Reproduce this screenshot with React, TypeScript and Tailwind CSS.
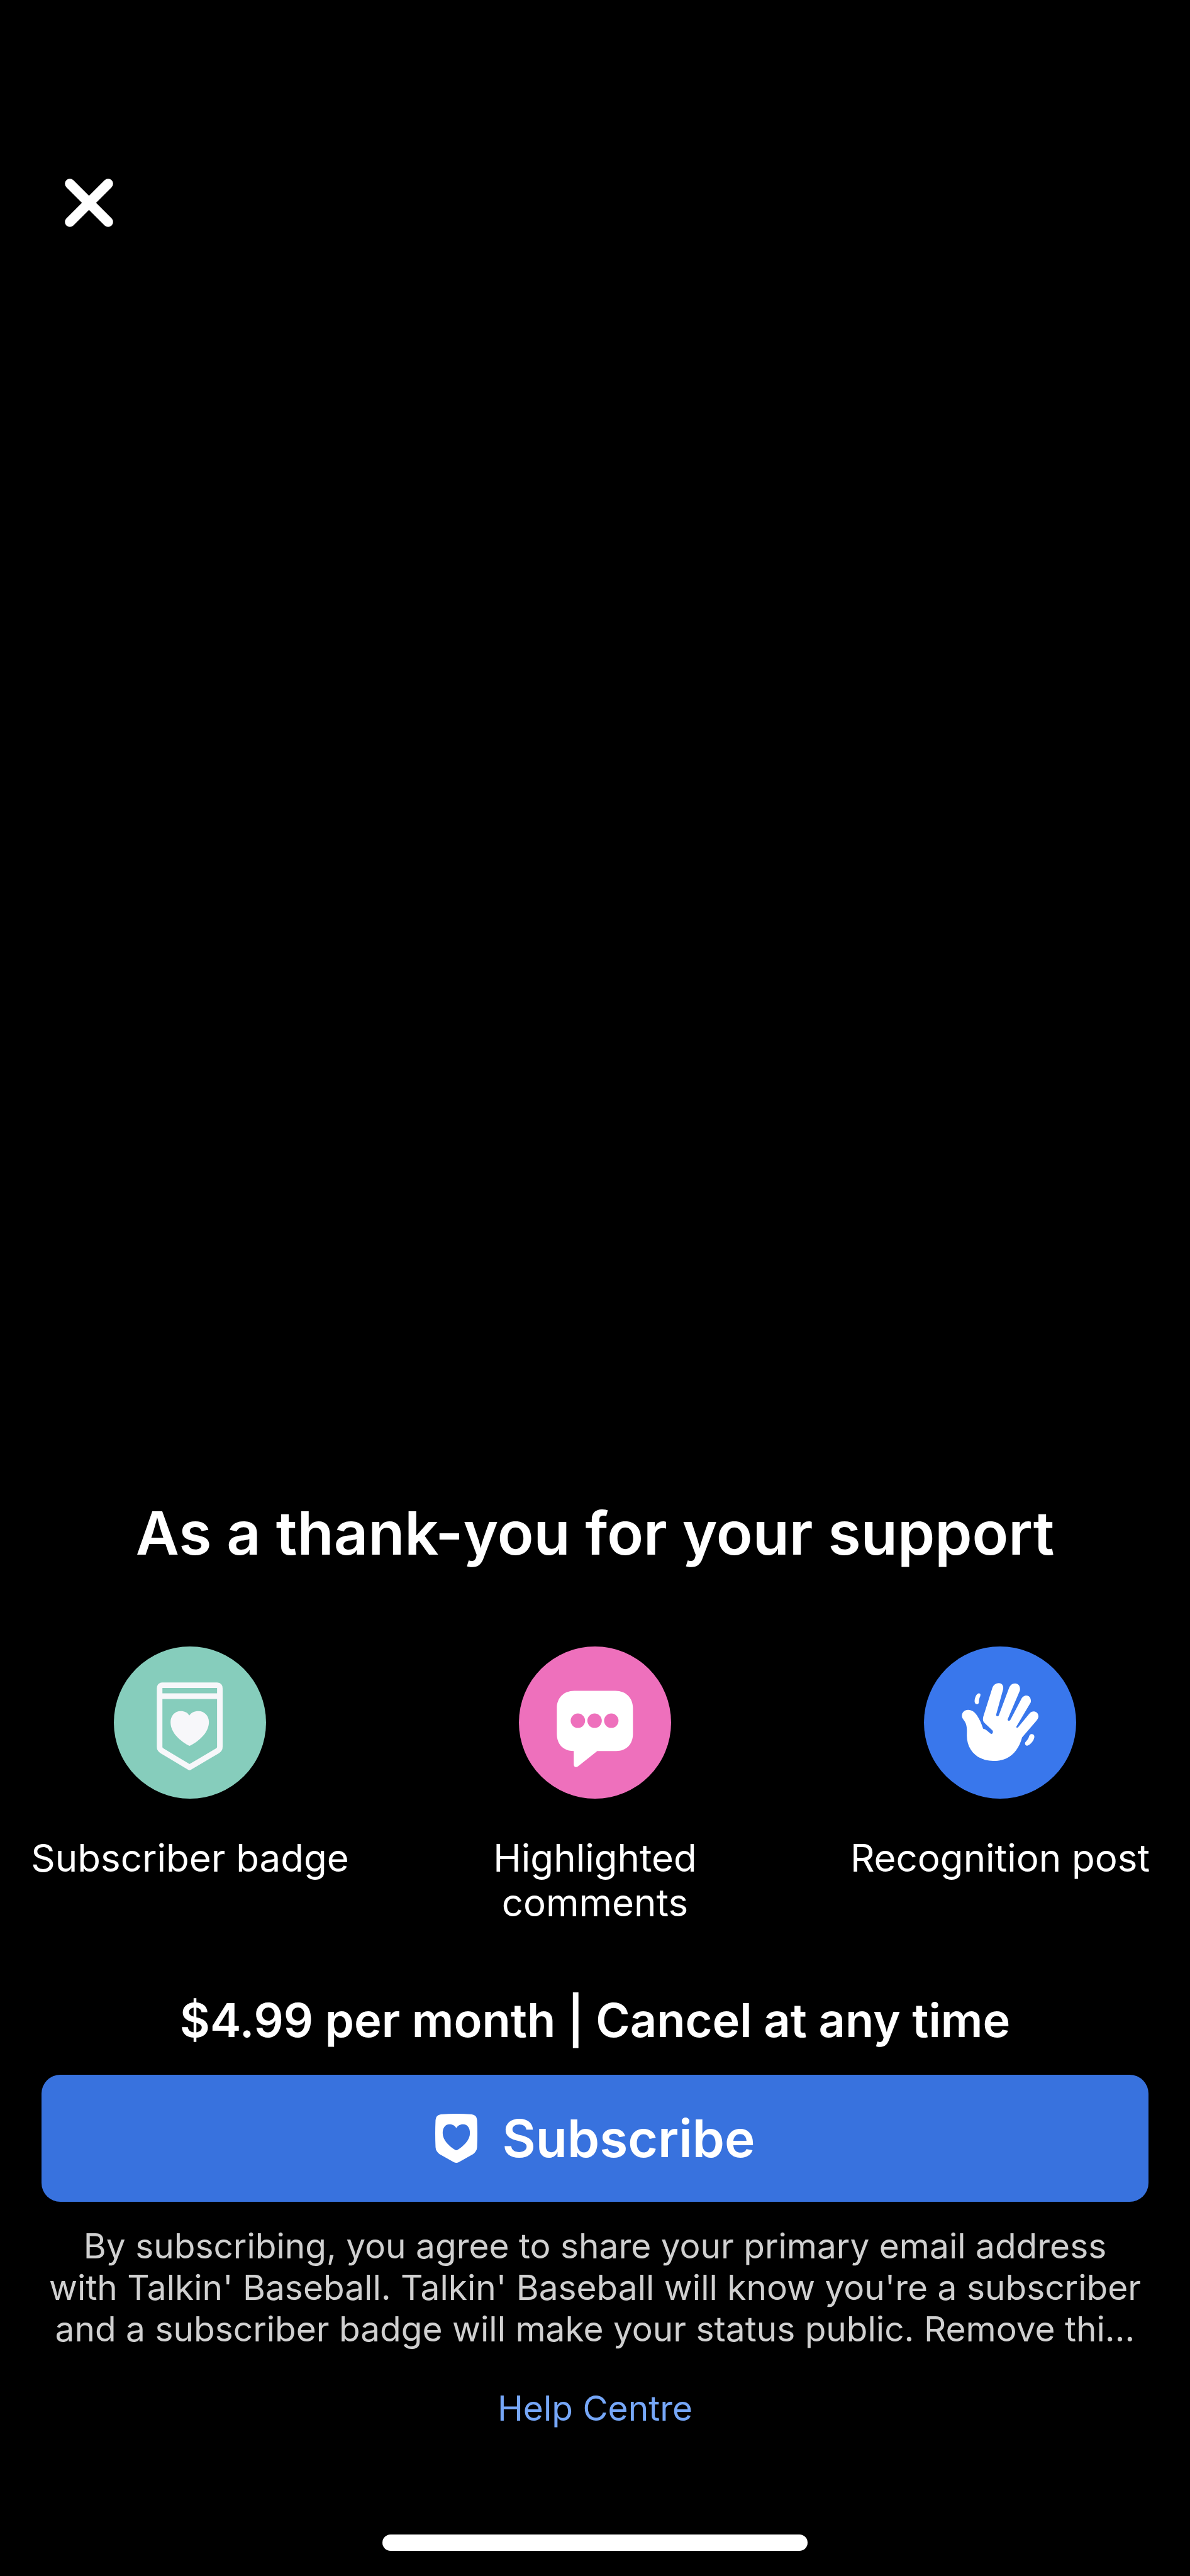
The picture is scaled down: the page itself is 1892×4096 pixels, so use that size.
import type { ReactNode } from 'react';

function CloseIcon() {
  return (
    <svg viewBox="0 0 78 78" className="size-[77px]" fill="none" stroke="currentColor" strokeWidth="16" strokeLinecap="round" aria-hidden="true">
      <path d="M8.200 8.200 69.800 69.800M69.800 8.200 8.200 69.800" />
    </svg>
  );
}

function BadgeIcon() {
  return (
    <svg viewBox="43 50 738 738" className="size-full" aria-hidden="true">
      <path
        d="M278 238H544Q557 238 557 253V537Q557 548 547 555L410 636L275 555Q265 548 265 537V253Q265 238 278 238Z"
        fill="none"
        stroke="#f7f7fa"
        strokeWidth="27"
        strokeLinejoin="round"
      />
      <path d="M265 291H557" stroke="#f7f7fa" strokeWidth="28" />
      <path
        d="M409 385C400 369 385 363 368 363C338 363 318 386 318 417C318 471 368 509 403 529Q410 534 417 529C454 509 504 469 504 416C504 386 482 363 453 363C434 363 418 370 409 385Z"
        fill="#f7f7fa"
      />
    </svg>
  );
}

function CommentIcon() {
  return (
    <svg viewBox="54 50 738 738" className="size-full" aria-hidden="true">
      <path
        d="M322 265H522C572 265 607 299 607 348V474C607 525 574 557 526 557H434L341 631C331 639 320 635 320 622V557C270 557 238 525 238 474V348C238 299 272 265 322 265Z"
        fill="#ffffff"
      />
      <g fill="#ee70bc">
        <circle cx="340" cy="410" r="35" />
        <circle cx="421" cy="410" r="35" />
        <circle cx="502" cy="410" r="35" />
      </g>
    </svg>
  );
}

function HandIcon() {
  return (
    <svg viewBox="65 50 738 738" className="size-full" fill="#ffffff" aria-hidden="true">
      <path d="M249 386C249 369 262 357 279 357C298 357 311 368 322 384C336 405 345 427 352 449C368 453 376 464 389 473C397 477 402 466 398 458L357 419C350 411 350 401 353 389L397 250C402 237 414 228 428 228C443 228 452 240 449 257L415 381C413 389 425 391 428 384L477 253C483 238 492 229 507 229C524 229 534 245 530 264L471 403C469 411 480 413 484 406L536 307C542 295 550 288 562 288C577 288 586 304 583 321L513 439C513 446 518 446 522 441L575 377C583 368 589 365 598 365C612 365 621 378 620 391C619 399 614 406 608 413L541 491C534 515 526 535 512 553C485 589 449 605 402 605C326 605 273 554 273 482C273 464 275 448 269 427C265 410 249 402 249 386Z" />
      <path d="M337 279C330 274 321 281 316 292C311 303 309 315 312 324C316 332 328 332 331 324C332 310 332 303 338 291C339 286 340 282 337 279Z" />
      <path d="M586 475C579 476 576 482 574 488C570 500 563 506 556 515C553 523 557 531 566 531C577 528 588 517 595 505C600 497 602 488 599 481C596 476 591 474 586 475Z" />
    </svg>
  );
}

function SubscribeIcon() {
  return (
    <svg viewBox="0 0 68 79" className="h-[78px] w-[67px]" fill="currentColor" fillRule="evenodd" aria-hidden="true">
      <path d="M9 1Q34-1 59 1Q67 2 67.500 10Q68.500 32 67.500 54Q67 61 61 65L38 78Q34 80 30 78L7 65Q1 61 .500 54Q-.500 32 .500 10Q1 2 9 1ZM34 23C31 18.500 27 17 23 17C16 17 12 23 12 31C12 43 23 52 31 57.500Q34 60 37 57.500C45 52 56 43 56 31C56 23 52 17 45 17C41 17 37 18.500 34 23Z" />
    </svg>
  );
}

function Perk({ color, label, children }: { color: string; label: string; children: ReactNode }) {
  return (
    <li className="flex flex-col items-center px-10">
      <div className={`size-[242px] overflow-hidden rounded-full ${color}`}>{children}</div>
      <p className="mt-[59px] text-center text-[60px] leading-[71px]">{label}</p>
    </li>
  );
}

export default function App() {
  return (
    <main className="flex min-h-screen flex-col bg-black font-['Inter',sans-serif] text-white">
      <header className="px-[103px] pt-[284px]">
        <button type="button" aria-label="Close" className="block">
          <CloseIcon />
        </button>
      </header>

      <section className="mt-auto">
        <h1 className="text-center text-[95px] leading-[120px] font-semibold">As a thank-you for your support</h1>
        <ul className="mt-30 grid grid-cols-3 gap-10">
          <Perk color="bg-[#86cdbc]" label="Subscriber badge">
            <BadgeIcon />
          </Perk>
          <Perk color="bg-[#ee70bc]" label="Highlighted comments">
            <CommentIcon />
          </Perk>
          <Perk color="bg-[#3977ec]" label="Recognition post">
            <HandIcon />
          </Perk>
        </ul>
      </section>

      <footer className="mt-[106px] flex flex-col px-[66px] pb-10 text-center">
        <p className="text-[74px] leading-[90px] font-semibold">$4.99 per month | Cancel at any time</p>
        <button type="button" className="mt-[42px] flex h-[202px] items-center justify-center gap-10 rounded-[30px] bg-[#3872de] text-[82px] font-semibold">
          <SubscribeIcon />
          Subscribe
        </button>
        <p className="mt-[37px] text-[55px] leading-[66px] whitespace-nowrap text-[#d0d0d0]">
          By subscribing, you agree to share your primary email address
          <br />
          with Talkin' Baseball. Talkin' Baseball will know you're a subscriber
          <br />
          and a subscriber badge will make your status public. Remove thi…
        </p>
        <a href="#help" className="mt-15 self-center text-[55px] leading-[66px] text-[#76a7f8]">
          Help Centre
        </a>
        <div className="mt-42 h-[26px] w-[676px] self-center rounded-full bg-white" />
      </footer>
    </main>
  );
}
